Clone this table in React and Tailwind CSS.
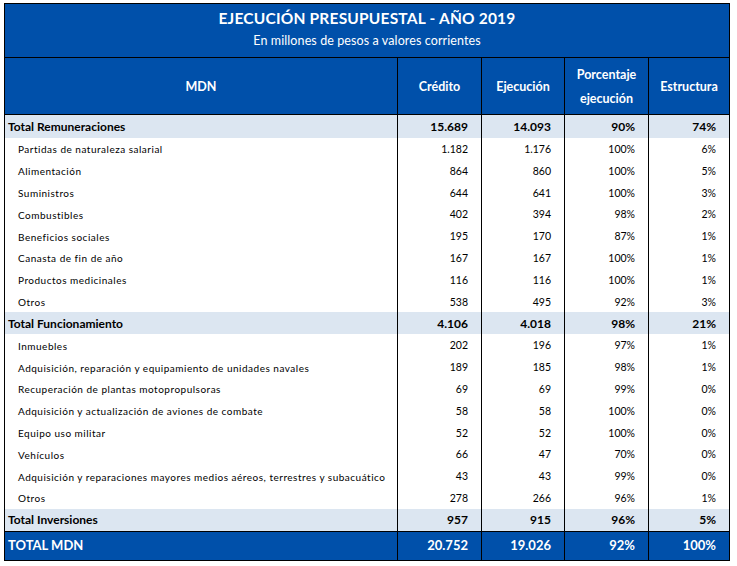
const remuneraciones = [
  ["Partidas de naturaleza salarial", "1.182", "1.176", "100%", "6%"],
  ["Alimentación", "864", "860", "100%", "5%"],
  ["Suministros", "644", "641", "100%", "3%"],
  ["Combustibles", "402", "394", "98%", "2%"],
  ["Beneficios sociales", "195", "170", "87%", "1%"],
  ["Canasta de fin de año", "167", "167", "100%", "1%"],
  ["Productos medicinales", "116", "116", "100%", "1%"],
  ["Otros", "538", "495", "92%", "3%"],
];

const funcionamiento = [
  ["Inmuebles", "202", "196", "97%", "1%"],
  ["Adquisición, reparación y equipamiento de unidades navales", "189", "185", "98%", "1%"],
  ["Recuperación de plantas motopropulsoras", "69", "69", "99%", "0%"],
  ["Adquisición y actualización de aviones de combate", "58", "58", "100%", "0%"],
  ["Equipo uso militar", "52", "52", "100%", "0%"],
  ["Vehículos", "66", "47", "70%", "0%"],
  ["Adquisición y reparaciones mayores medios aéreos, terrestres y subacuático", "43", "43", "99%", "0%"],
  ["Otros", "278", "266", "96%", "1%"],
];

const cols = "grid grid-cols-[392px_84px_83px_84px_81px]";

function TotalRow({ label, values, h = "h-[22px]" }) {
  return (
    <div className={`${cols} ${h} bg-[#dce6f1] text-[12px] font-bold text-black`}>
      <div className="flex items-center pl-[3px] pt-[1px]">{label}</div>
      {values.map((v, i) => (
        <div key={i} className="flex items-center justify-end border-l border-black pr-[13px] pt-[1px]">
          {v}
        </div>
      ))}
    </div>
  );
}

function ItemRow({ row }) {
  const [label, ...values] = row;
  return (
    <div className={`${cols} h-[21.8px] bg-white text-[10px] text-black`}>
      <div className="flex items-center pl-[13px] pt-[2px] tracking-[0.5px]">{label}</div>
      {values.map((v, i) => (
        <div key={i} className="flex items-center justify-end border-l border-black pr-[13px] pt-[2px] text-[10.5px]">
          {v}
        </div>
      ))}
    </div>
  );
}

export default function App() {
  return (
    <div className="w-[737px] h-[566px] bg-white pl-[4px] pt-[3px] font-['Lato','Liberation_Sans',sans-serif]">
      <div className="w-[726px] border-[1.5px] border-black">
        {/* titulo */}
        <div className="h-[54px] bg-[#0050aa] text-white flex flex-col items-center border-b border-black">
          <p className="mt-[3px] text-[15.5px] font-bold tracking-[0.2px]">EJECUCIÓN PRESUPUESTAL - AÑO 2019</p>
          <p className="mt-[2px] text-[12.5px] tracking-[0.1px]">En millones de pesos a valores corrientes</p>
        </div>
        {/* encabezado */}
        <div className={`${cols} h-[57px] bg-[#0050aa] text-white text-[12.5px] font-bold border-b border-black`}>
          <div className="flex items-center justify-center pt-[2px]">MDN</div>
          <div className="flex items-center justify-center border-l border-black pt-[2px]">Crédito</div>
          <div className="flex items-center justify-center border-l border-black pt-[2px]">Ejecución</div>
          <div className="flex flex-col items-center justify-center border-l border-black leading-[24px] pt-[2px]">
            <span>Porcentaje</span>
            <span>ejecución</span>
          </div>
          <div className="flex items-center justify-center border-l border-black pt-[2px]">Estructura</div>
        </div>

        <TotalRow label="Total Remuneraciones" values={["15.689", "14.093", "90%", "74%"]} h="h-[23px]" />
        {remuneraciones.map((r) => (
          <ItemRow key={r[0]} row={r} />
        ))}
        <TotalRow label="Total Funcionamiento" values={["4.106", "4.018", "98%", "21%"]} />
        {funcionamiento.map((r, i) => (
          <ItemRow key={i} row={r} />
        ))}
        <TotalRow label="Total Inversiones" values={["957", "915", "96%", "5%"]} h="h-[22px]" />

        <div className={`${cols} h-[29px] bg-[#0050aa] text-white text-[13px] font-bold border-t border-black`}>
          <div className="flex items-center pl-[3px]">TOTAL MDN</div>
          {["20.752", "19.026", "92%", "100%"].map((v) => (
            <div key={v} className="flex items-center justify-end border-l border-black pr-[13px]">
              {v}
            </div>
          ))}
        </div>
      </div>
    </div>
  );
}
